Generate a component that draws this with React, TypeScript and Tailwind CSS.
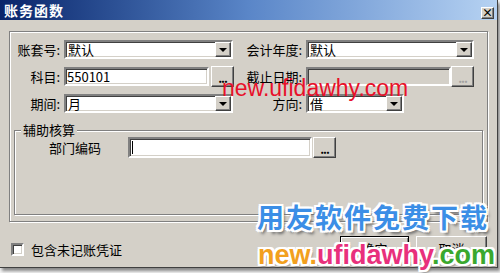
import React from 'react';

const font = { fontFamily: '"Noto Sans CJK SC", "Liberation Sans", sans-serif' };

const sunken =
  'border-2 border-t-[#808080] border-l-[#808080] border-b-white border-r-white shadow-[inset_1px_1px_0_#404040,inset_-1px_-1px_0_#d4d0c8]';
const raised =
  'border border-t-white border-l-white border-b-[#404040] border-r-[#404040] shadow-[inset_-1px_-1px_0_#808080]';

function Arrow() {
  return (
    <div className={`w-[16px] h-full bg-[#d4d0c8] flex items-center justify-center ${raised}`}>
      <div className="w-0 h-0 border-l-[4px] border-r-[4px] border-t-[4px] border-l-transparent border-r-transparent border-t-black" />
    </div>
  );
}

function Combo({ value, w }: { value: string; w: string }) {
  return (
    <div className={`${w} h-[19px] bg-white flex items-stretch ${sunken}`}>
      <div className="flex-1 pl-[2px] text-[13px] leading-[15px] text-black">{value}</div>
      <Arrow />
    </div>
  );
}

function Dots({ disabled, h }: { disabled?: boolean; h: string }) {
  return (
    <div className={`w-[23px] ${h} bg-[#d4d0c8] flex items-center justify-center ${raised}`}>
      <span className={`text-[12px] font-bold leading-none tracking-[-1px] mt-[3px] ${disabled ? 'text-[#a0a0a0]' : 'text-black'}`}>...</span>
    </div>
  );
}

function Label({ text, w }: { text: string; w: string }) {
  return <div className={`${w} text-right text-[13px] text-black leading-[18px] pr-[4px]`}>{text}</div>;
}

export default function App() {
  return (
    <div className="w-[500px] h-[273px] bg-[#f4f4f4] relative overflow-hidden" style={font}>
      <div className="w-[498px] h-[268px] bg-[#d4d0c8] border-r border-b border-r-[#404040] border-b-[#404040] shadow-[2px_3px_3px_#888]">
        <div className="h-[20px] bg-gradient-to-r from-[#0a246a] via-[#5a86c8] to-[#b6d2f2] flex items-center justify-between pl-[4px] pr-[3px]">
          <span className="text-white font-bold text-[14px] leading-none tracking-[1px]">账务函数</span>
          <div className={`w-[13px] h-[12px] mt-[5px] bg-[#d4d0c8] flex items-center justify-center text-[11px] leading-none font-bold text-black ${raised}`}>×</div>
        </div>

        <div className="pt-[11px] px-[9px]">
          <div className="w-[479px] h-[191px] border border-[#808080] shadow-[1px_1px_0_white,inset_1px_1px_0_white] pt-[8px] px-[3px]">
            <div className="flex flex-col gap-[7px]">
              <div className="flex items-center">
                <Label text="账套号:" w="w-[51px]" />
                <Combo value="默认" w="w-[169px]" />
                <Label text="会计年度:" w="w-[73px]" />
                <Combo value="默认" w="w-[168px]" />
              </div>
              <div className="flex items-center">
                <Label text="科目:" w="w-[51px]" />
                <div className={`w-[145px] h-[19px] bg-white text-[13px] leading-[15px] pl-[1px] ${sunken}`}>550101</div>
                <div className="ml-[2px]"><Dots h="h-[21px]" /></div>
                <Label text="截止日期:" w="w-[72px]" />
                <div className={`w-[145px] h-[19px] bg-[#d4d0c8] ${sunken}`} />
                <div><Dots disabled h="h-[21px]" /></div>
              </div>
              <div className="flex items-center">
                <Label text="期间:" w="w-[51px]" />
                <Combo value="月" w="w-[169px]" />
                <Label text="方向:" w="w-[73px]" />
                <Combo value="借" w="w-[98px]" />
              </div>
            </div>

            <div className="relative mt-[17px] mx-[1px] w-[469px] h-[85px] border border-[#808080] shadow-[1px_1px_0_white,inset_1px_1px_0_white]">
              <div className="absolute -top-[10px] left-[6px] bg-[#d4d0c8] px-[2px] text-[13px] leading-[18px] text-black">辅助核算</div>
              <div className="flex items-center pt-[6px] pl-[34px]">
                <div className="w-[79px] text-[13px] leading-[18px] text-black">部门编码</div>
                <div className={`w-[184px] h-[21px] bg-white flex items-center pl-[2px] ${sunken}`}>
                  <div className="w-[1px] h-[13px] bg-black" />
                </div>
                <div className="ml-[1px]"><Dots h="h-[21px]" /></div>
              </div>
            </div>
          </div>

          <div className="flex items-center justify-between mt-[10px] pl-[2px] pr-[1px]">
            <div className="flex items-center gap-[7px] mt-[6px]">
              <div className={`w-[13px] h-[13px] bg-white ${sunken}`} />
              <span className="text-[13px] leading-[18px] text-black">包含未记账凭证</span>
            </div>
            <div className="flex items-center gap-[7px] mt-[4px]">
              <div className="w-[69px] h-[25px] bg-[#d4d0c8] flex items-center justify-center text-[13px] text-black border border-black shadow-[inset_1px_1px_0_white,inset_-1px_-1px_0_#808080]">确定</div>
              <div className={`w-[71px] h-[25px] bg-[#d4d0c8] flex items-center justify-center text-[13px] text-black ${raised}`}>取消</div>
            </div>
          </div>
        </div>
      </div>

      {/* watermarks */}
      <div
        className="absolute left-[222px] top-[74px] text-[23px] leading-[28px] text-[#e8102a] whitespace-nowrap"
        style={{ fontFamily: '"Liberation Sans", sans-serif' }}
      >
        new.ufidawhy.com
      </div>
      <div
        className="absolute left-[257px] top-[199px] text-[27px] leading-[36px] font-bold tracking-[2px] text-[#3b8ee6] whitespace-nowrap [text-shadow:-2px_-2px_0_#fff,2px_-2px_0_#fff,-2px_2px_0_#fff,2px_2px_0_#fff,0_2px_0_#fff,0_-2px_0_#fff,2px_0_0_#fff,-2px_0_0_#fff,3px_4px_3px_#6a6a6a]"
        style={font}
      >
        用友软件免费下载
      </div>
      <div
        className="absolute left-[258px] top-[238px] text-[27px] leading-[34px] font-bold whitespace-nowrap [text-shadow:-2px_-2px_0_#fff,2px_-2px_0_#fff,-2px_2px_0_#fff,2px_2px_0_#fff,0_2px_0_#fff,0_-2px_0_#fff,2px_0_0_#fff,-2px_0_0_#fff,2px_3px_3px_#777]"
        style={{ fontFamily: '"Liberation Sans", sans-serif' }}
      >
        <span className="text-[#f2a01e]">new.</span>
        <span className="text-[#e8307c]">ufidawhy</span>
        <span className="text-[#3aa82e]">.com</span>
      </div>
    </div>
  );
}
